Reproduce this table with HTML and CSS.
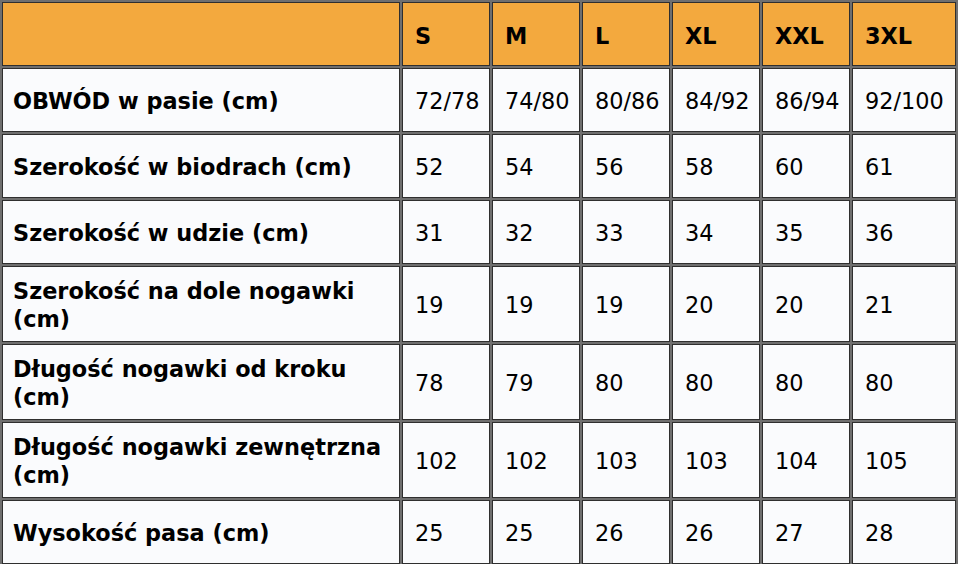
FILE: index.html
```html
<!DOCTYPE html>
<html lang="pl">
<head>
<meta charset="utf-8">
<title>Tabela rozmiarów</title>
<link rel="stylesheet" href="styles.css">
</head>
<body>
<table class="sizes">
  <thead>
    <tr>
      <th class="c-label"></th>
      <th class="c-size">S</th>
      <th class="c-size">M</th>
      <th class="c-size">L</th>
      <th class="c-size">XL</th>
      <th class="c-size">XXL</th>
      <th class="c-last">3XL</th>
    </tr>
  </thead>
  <tbody>
    <tr><td class="label">OBWÓD w pasie (cm)</td><td>72/78</td><td>74/80</td><td>80/86</td><td>84/92</td><td>86/94</td><td>92/100</td></tr>
    <tr><td class="label">Szerokość w biodrach (cm)</td><td>52</td><td>54</td><td>56</td><td>58</td><td>60</td><td>61</td></tr>
    <tr><td class="label">Szerokość w udzie (cm)</td><td>31</td><td>32</td><td>33</td><td>34</td><td>35</td><td>36</td></tr>
    <tr><td class="label">Szerokość na dole nogawki<br>(cm)</td><td>19</td><td>19</td><td>19</td><td>20</td><td>20</td><td>21</td></tr>
    <tr><td class="label">Długość nogawki od kroku<br>(cm)</td><td>78</td><td>79</td><td>80</td><td>80</td><td>80</td><td>80</td></tr>
    <tr><td class="label">Długość nogawki zewnętrzna<br>(cm)</td><td>102</td><td>102</td><td>103</td><td>103</td><td>104</td><td>105</td></tr>
    <tr><td class="label">Wysokość pasa (cm)</td><td>25</td><td>25</td><td>26</td><td>26</td><td>27</td><td>28</td></tr>
  </tbody>
</table>
</body>
</html>
```

FILE: styles.css
```css
html, body {
  margin: 0;
  padding: 0;
  background: #ffffff;
  overflow: hidden;
}

.sizes {
  width: 958px;
  table-layout: fixed;
  border-collapse: separate;
  border-spacing: 2px;
  background: #6f6f6f;
  font-family: Verdana, "DejaVu Sans", sans-serif;
  font-size: 22.4px;
  line-height: 28px;
  color: #000000;
}

.sizes th,
.sizes td {
  box-sizing: border-box;
  border: 1px solid #2f2f2f;
  padding: 10px 8px 8px 12px;
  height: 64px;
  text-align: left;
  vertical-align: middle;
  background: #fafbfd;
  white-space: nowrap;
}

.sizes th {
  background: #f3a93e;
  font-weight: bold;
  padding-top: 12px;
  padding-bottom: 8px;
}

.c-label { width: 398px; }
.c-size { width: 88px; }
.c-last { width: 104px; }

.sizes td.label {
  font-weight: bold;
  padding-left: 10px;
  padding-right: 4px;
}
```
